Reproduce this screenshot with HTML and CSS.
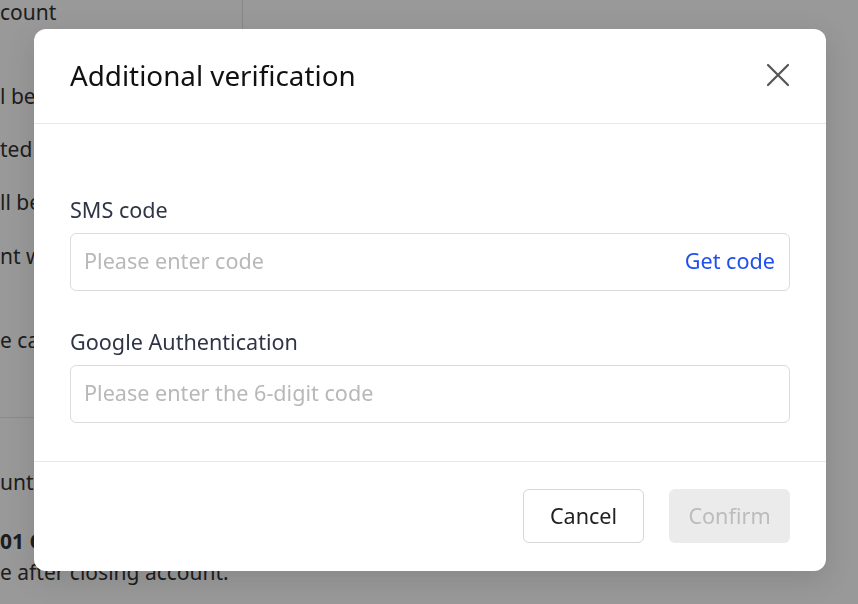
FILE: index.html
```html
<!DOCTYPE html>
<html lang="en">
<head>
<meta charset="utf-8">
<title>Additional verification</title>
<link rel="stylesheet" href="styles.css">
</head>
<body>
<div class="page">
  <aside class="side">
    <div class="bg-line l1">count</div>
    <div class="bg-line l2">l be</div>
    <div class="bg-line l3">ted</div>
    <div class="bg-line l4">ll be</div>
    <div class="bg-line l5">nt w</div>
    <div class="bg-line l6">e ca</div>
    <hr class="bg-rule">
    <div class="bg-line l7">unt</div>
    <div class="bg-line l8 bold">01 C</div>
    <div class="bg-line l9">e after closing account.</div>
  </aside>
  <main class="main"></main>
</div>
<div class="overlay"></div>
<div class="modal" role="dialog" aria-labelledby="mt">
  <header class="modal-head">
    <h2 id="mt" class="modal-title">Additional verification</h2>
    <button class="close" aria-label="Close">
      <svg width="24" height="24" viewBox="0 0 24 24"><path d="M2 2L22 22M22 2L2 22" stroke="#555" stroke-width="2.2" stroke-linecap="round" fill="none"/></svg>
    </button>
  </header>
  <div class="modal-body">
    <label class="field-label">SMS code</label>
    <div class="input">
      <span class="ph">Please enter code</span>
      <span class="get">Get code</span>
    </div>
    <label class="field-label second">Google Authentication</label>
    <div class="input">
      <span class="ph">Please enter the 6-digit code</span>
    </div>
  </div>
  <footer class="modal-foot">
    <button class="btn cancel">Cancel</button>
    <button class="btn confirm">Confirm</button>
  </footer>
</div>
</body>
</html>
```
FILE: styles.css
```css
html, body {
  margin: 0;
  padding: 0;
  width: 858px;
  height: 604px;
  overflow: hidden;
  font-family: "Noto Sans", "Open Sans", sans-serif;
  background: #fff;
}
.page {
  display: flex;
  height: 604px;
}
.side {
  width: 242px;
  font-size: 21px;
  color: #333;
  line-height: 28px;
}
.main {
  flex: 1;
  align-self: flex-start;
  height: 420px;
  border-left: 1px solid #e2e2e2;
}
.bg-line { white-space: nowrap; }
.l1 { margin-top: -2px; }
.l2 { margin-top: 56px; }
.l3 { margin-top: 25px; }
.l4 { margin-top: 25px; }
.l5 { margin-top: 26px; }
.l6 { margin-top: 56px; }
.bg-rule { border: 0; border-top: 1px solid #e6e6e6; margin: 63px 0 0 0; }
.l7 { margin-top: 50px; }
.l8 { margin-top: 31px; font-weight: 700; }
.l9 { margin-top: 3px; }

.overlay {
  position: fixed;
  inset: 0;
  background: rgba(0, 0, 0, 0.4);
}
.modal {
  position: absolute;
  left: 34px;
  top: 29px;
  width: 792px;
  background: #fff;
  border-radius: 12px;
  box-shadow: 0 8px 30px rgba(0,0,0,0.12);
  overflow: hidden;
}
.modal-head {
  height: 94px;
  padding: 0 36px;
  display: flex;
  align-items: center;
  justify-content: space-between;
  border-bottom: 1px solid #e8e8e8;
}
.modal-title {
  margin: 0;
  font-size: 27.8px;
  font-weight: 400;
  color: #111;
  padding-bottom: 2px;
}
.close {
  border: 0;
  background: none;
  padding: 0;
  width: 24px;
  height: 24px;
  margin-right: 0;
  margin-bottom: 3px;
  display: flex;
}
.modal-body {
  padding: 72px 36px 38px;
  display: flex;
  flex-direction: column;
}
.field-label {
  font-size: 21.6px;
  line-height: 28px;
  color: #2f3546;
  margin-bottom: 9px;
}
.field-label.second { margin-top: 37px; }
.input {
  height: 56px;
  box-sizing: content-box;
  border: 1px solid #dcdcdc;
  border-radius: 6px;
  display: flex;
  align-items: center;
  justify-content: space-between;
  padding: 0 14px 0 13px;
  font-size: 21.6px;
  line-height: 28px;
}
.input span { margin-top: -3px; }
.ph { color: #b8b8b8; }
.get { color: #1f4ff0; }
.modal-foot {
  border-top: 1px solid #e8e8e8;
  padding: 27px 36px 28px;
  display: flex;
  justify-content: flex-end;
  gap: 25px;
}
.btn {
  width: 121px;
  height: 54px;
  border-radius: 6px;
  font-family: inherit;
  font-size: 21.6px;
  padding: 0 0 2px;
}
.cancel {
  background: #fff;
  border: 1px solid #d6d6d6;
  color: #222;
}
.confirm {
  background: #ebebeb;
  border: 0;
  color: #bcbcbc;
}
```
